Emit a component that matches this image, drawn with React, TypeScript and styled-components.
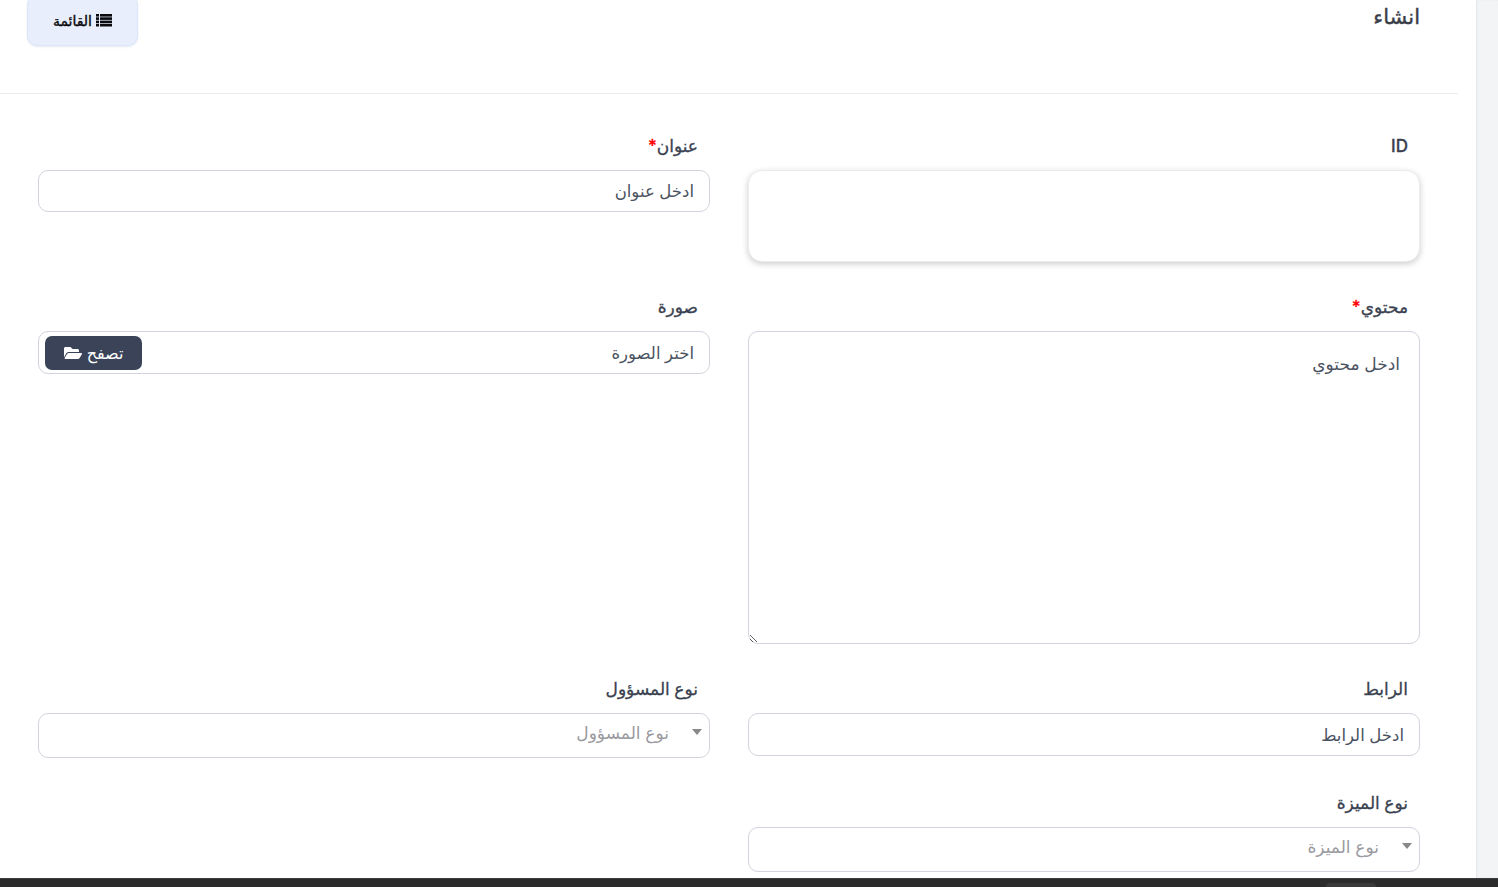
import styled, { createGlobalStyle } from 'styled-components'
import { FaFolderOpen } from 'react-icons/fa'

const FONT = `Inter, "DejaVu Sans", sans-serif`

const ListIcon = () => (
  <svg width='16' height='13' viewBox='0 0 16 13' fill='currentColor'>
    {[0, 3.3, 6.6, 9.9].map((y) => (
      <g key={y}>
        <rect x='0' y={y} width='3' height='2.6' />
        <rect x='4' y={y} width='12' height='2.6' />
      </g>
    ))}
  </svg>
)

const App = () => {
  return (
    <>
      <GlobalStyle />
      <Page>
        <Body>
          <Scrollbar />
          <Main>
            <Header>
              <Title>انشاء</Title>
              <ListBtn>
                <ListIcon />
                القائمة
              </ListBtn>
            </Header>
            <Form>
              <Field>
                <Label>ID</Label>
                <IdBox />
              </Field>
              <Field>
                <Label>عنوان<Req>*</Req></Label>
                <Input placeholder='ادخل عنوان' />
              </Field>
              <Field>
                <Label>محتوي<Req>*</Req></Label>
                <TextArea placeholder='ادخل محتوي' />
              </Field>
              <Field>
                <Label>صورة</Label>
                <FileBox>
                  <FileText>اختر الصورة</FileText>
                  <BrowseBtn>
                    تصفح
                    <FaFolderOpen size={18} />
                  </BrowseBtn>
                </FileBox>
              </Field>
              <Field>
                <Label>الرابط</Label>
                <LinkInput placeholder='ادخل الرابط' />
              </Field>
              <Field>
                <Label>نوع المسؤول</Label>
                <Select>
                  <Arrow />
                  نوع المسؤول
                </Select>
              </Field>
              <Field>
                <Label>نوع الميزة</Label>
                <Select>
                  <Arrow />
                  نوع الميزة
                </Select>
              </Field>
            </Form>
          </Main>
        </Body>
        <BottomBar>
          <BarTab />
        </BottomBar>
      </Page>
    </>
  )
}
export default App

const GlobalStyle = createGlobalStyle`
  html, body {
    margin: 0;
    padding: 0;
    height: 100%;
    overflow: hidden;
    background: #fff;
  }
  * {
    box-sizing: border-box;
  }
`
const Page = styled.div`
  height: 887px;
  display: flex;
  flex-direction: column;
  font-family: ${FONT};
  overflow: hidden;
`
const Body = styled.div`
  flex: 1;
  min-height: 0;
  display: flex;
  flex-direction: row-reverse;
  overflow: hidden;
`
const Scrollbar = styled.div`
  width: 22px;
  background: #f3f4f6;
  box-shadow: inset 1px 0 2px #e2e4e8;
`
const Main = styled.main`
  flex: 1;
  min-width: 0;
  margin-top: -5px;
  direction: rtl;
`
const Header = styled.div`
  width: 1458px;
  margin-right: 18px;
  height: 99px;
  padding-right: 38px;
  border-bottom: 1px solid #e9e9ee;
  display: flex;
  justify-content: space-between;
  align-items: flex-start;
`
const Title = styled.h3`
  margin: 9px 0 0;
  font-size: 21px;
  line-height: 26px;
  font-weight: 500;
  -webkit-text-stroke: 0.4px #3a3f4a;
  color: #3a3f4a;
`
const ListBtn = styled.button`
  width: 111px;
  height: 51px;
  margin-left: 27px;
  display: flex;
  align-items: center;
  justify-content: center;
  gap: 4px;
  direction: rtl;
  background: #e8eefc;
  border: 1px solid #dde6f8;
  border-radius: 10px;
  box-shadow: 0 1px 2px rgba(90, 120, 190, 0.15);
  font-family: ${FONT};
  font-size: 14px;
  font-weight: 500;
  -webkit-text-stroke: 0.4px #0b0b0f;
  color: #0b0b0f;
`
const Form = styled.div`
  padding: 40px 56px 0 38px;
  display: grid;
  grid-template-columns: 672px 672px;
  column-gap: 38px;
  row-gap: 33px;
  align-items: start;
`
const Field = styled.div`
  display: flex;
  flex-direction: column;
`
const Label = styled.label`
  height: 24px;
  line-height: 24px;
  margin-bottom: 12px;
  padding-right: 12px;
  font-size: 17px;
  font-weight: 500;
  -webkit-text-stroke: 0.3px #394150;
  color: #394150;
`
const Req = styled.span`
  color: #f00;
  -webkit-text-stroke: 0.3px #f00;
`
const IdBox = styled.div`
  height: 92px;
  border: 1px solid #ececf0;
  border-radius: 14px;
  background: #fff;
  box-shadow: 0 2px 6px rgba(0, 0, 0, 0.2);
`
const Input = styled.input`
  height: 42px;
  padding: 0 15px;
  border: 1px solid #d2d3dc;
  border-radius: 10px;
  outline: none;
  font-family: ${FONT};
  font-size: 16.5px;
  color: #3f4756;
  &::placeholder {
    color: #4a5261;
    opacity: 1;
  }
`
const LinkInput = styled(Input)`
  height: 43px;
`
const TextArea = styled.textarea`
  display: block;
  height: 313px;
  padding: 20px 19px;
  border: 1px solid #d2d3dc;
  border-radius: 10px;
  outline: none;
  font-family: ${FONT};
  font-size: 17px;
  line-height: 24px;
  resize: both;
  &::placeholder {
    color: #4a5261;
    opacity: 1;
  }
`
const FileBox = styled.div`
  height: 43px;
  padding: 0 15px 0 6px;
  border: 1px solid #d2d3dc;
  border-radius: 10px;
  display: flex;
  align-items: center;
  justify-content: space-between;
`
const FileText = styled.span`
  font-size: 16.5px;
  color: #4a5261;
`
const BrowseBtn = styled.button`
  width: 97px;
  height: 34px;
  display: flex;
  align-items: center;
  justify-content: center;
  gap: 5px;
  border: none;
  border-radius: 7px;
  background: #3a4358;
  color: #fff;
  font-family: ${FONT};
  font-size: 16px;
`
const Select = styled.div`
  position: relative;
  height: 45px;
  padding: 0 40px 5px 0;
  border: 1px solid #d2d3dc;
  border-radius: 10px;
  display: flex;
  align-items: center;
  font-size: 17px;
  color: #9a9a9f;
`
const Arrow = styled.span`
  position: absolute;
  top: 15px;
  right: 7px;
  width: 0;
  height: 0;
  border-left: 5px solid transparent;
  border-right: 5px solid transparent;
  border-top: 6px solid #888;
`
const BottomBar = styled.div`
  position: relative;
  height: 9px;
  background: #2b2b2b;
  border-top: 1px solid #3c3c3c;
`
const BarTab = styled.div`
  position: absolute;
  top: 4px;
  left: 1326px;
  width: 50px;
  height: 6px;
  background: #3a3a3a;
  border-radius: 4px 4px 0 0;
`
